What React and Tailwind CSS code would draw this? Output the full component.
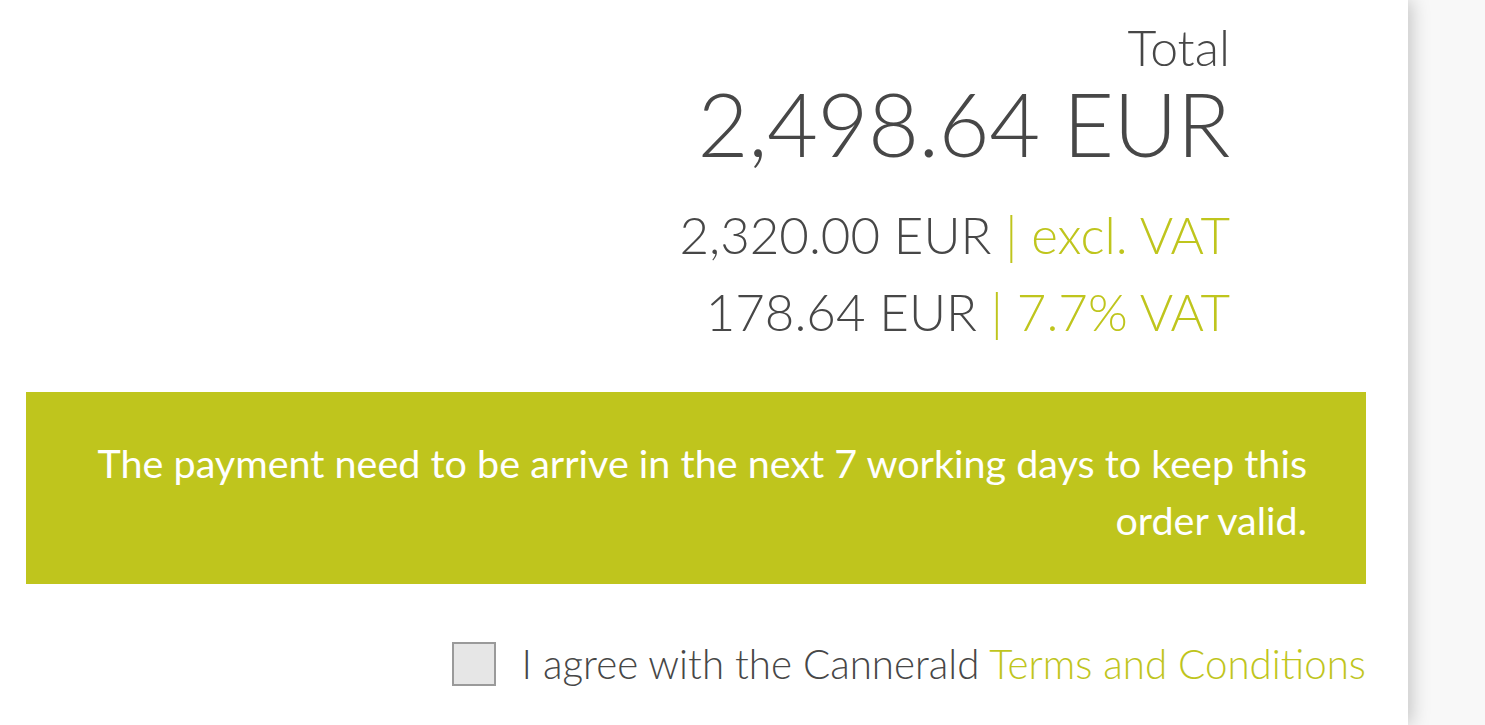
import { useState } from "react";

export default function App() {
  const [agreed, setAgreed] = useState(false);

  return (
    <div
      className="flex min-h-[725px] w-full bg-[#f8f8f8]"
      style={{ fontFamily: "Lato, 'Open Sans', sans-serif" }}
    >
      {/* Main panel */}
      <div className="relative z-10 w-[1408px] shrink-0 bg-white shadow-[3px_0_18px_rgba(0,0,0,0.22)]">
        {/* Totals */}
        <div className="flex flex-col items-end pr-[178px] pt-[22px] text-[#474747]">
          <div className="text-[50px] font-light leading-[50px]">Total</div>
          <div className="mt-[11px] text-[88px] font-light leading-[80px] tracking-[-0.5px]">
            2,498.64 EUR
          </div>
          <div className="mt-[33px] text-[51px] font-light leading-[77px]">
            2,320.00 EUR <span className="text-[#bfc51d]">| excl. VAT</span>
          </div>
          <div className="text-[51px] font-light leading-[77px]">
            178.64 EUR <span className="text-[#bfc51d]">| 7.7% VAT</span>
          </div>
        </div>

        {/* Payment notice */}
        <div className="ml-[26px] mr-[42px] mt-[42px] bg-[#bfc51d] pt-[42px] pb-[36px] pr-[59px] pl-[60px] text-right text-[39.5px] leading-[57px] text-white">
          The payment need to be arrive in the next 7 working days to keep this
          order valid.
        </div>

        {/* Terms */}
        <label className="mr-[42px] mt-[56px] flex cursor-pointer items-center justify-end gap-[26px]">
          <input
            type="checkbox"
            checked={agreed}
            onChange={(e) => setAgreed(e.target.checked)}
            className="h-[44px] w-[44px] appearance-none border-2 border-[#9a9a9a] bg-[#e6e6e6] checked:bg-[#bfc51d]"
          />
          <span className="text-[40.3px] font-light leading-[48px] text-[#474747]">
            I agree with the Cannerald{" "}
            <span className="text-[#bfc51d]">Terms and Conditions</span>
          </span>
        </label>
      </div>

      {/* Right gutter */}
      <div className="flex-1" />
    </div>
  );
}
